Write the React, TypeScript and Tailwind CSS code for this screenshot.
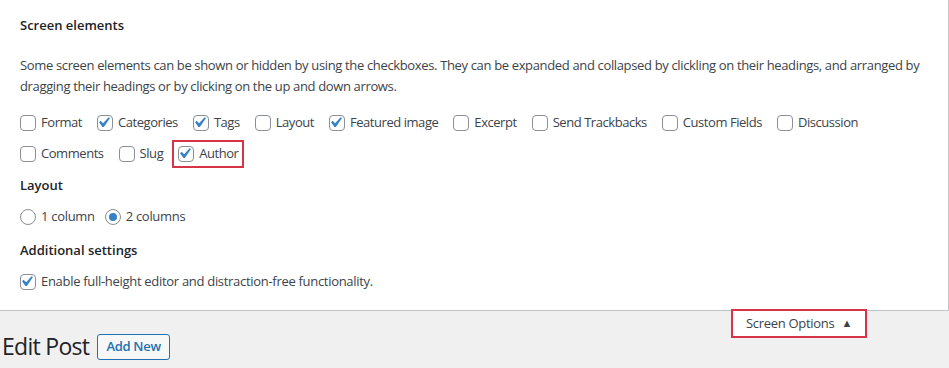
import React from 'react';

const font = { fontFamily: '"Open Sans", "Noto Sans", sans-serif' };

const Check: React.FC<{ checked?: boolean }> = ({ checked }) => (
  <span className="relative inline-block w-4 h-4 shrink-0 rounded-[4px] border border-[#8c8f94] bg-white">
    {checked && (
      <svg viewBox="0 0 20 20" className="absolute -left-[5px] -top-[4px] w-[21px] h-[21px]">
        <path d="M14.83 4.89l1.34.94-5.81 8.38H9.02L5.78 9.67l1.34-1.25 2.57 2.4z" fill="#3582c4" />
      </svg>
    )}
  </span>
);

const Radio: React.FC<{ checked?: boolean }> = ({ checked }) => (
  <span className="inline-flex items-center justify-center w-4 h-4 shrink-0 rounded-full border border-[#8c8f94] bg-white">
    {checked && <span className="w-2 h-2 rounded-full bg-[#3582c4]" />}
  </span>
);

const Item: React.FC<{ label: string; checked?: boolean; marked?: boolean }> = ({ label, checked, marked }) => (
  <label
    className={
      marked
        ? 'flex items-center gap-[5px] mr-[14px] -ml-[6px] pl-[4px] pr-[4px] h-[28px] border-2 border-[#d63447]'
        : 'flex items-center gap-[5px] mr-[15px]'
    }
  >
    <Check checked={checked} />
    <span>{label}</span>
  </label>
);

const row1 = [
  { label: 'Format' },
  { label: 'Categories', checked: true },
  { label: 'Tags', checked: true },
  { label: 'Layout' },
  { label: 'Featured image', checked: true },
  { label: 'Excerpt' },
  { label: 'Send Trackbacks' },
  { label: 'Custom Fields' },
  { label: 'Discussion' },
];

const App: React.FC = () => {
  return (
    <div className="w-[949px] h-[368px] overflow-hidden bg-[#f0f0f1] text-[13px] text-[#3c434a]" style={font}>
      <div className="h-[311px] bg-white border-r border-b border-[#c3c4c7] pl-5 pr-6 pt-[15px]">
        <h5 className="h-5 leading-5 font-semibold text-[#1d2327]">Screen elements</h5>
        <p className="mt-5 leading-[21px] tracking-[-0.35px]">
          Some screen elements can be shown or hidden by using the checkboxes. They can be expanded and collapsed by clickling on
          their headings, and arranged by dragging their headings or by clicking on the up and down arrows.
        </p>
        <div className="mt-[10px] flex h-[31px] items-center tracking-[-0.45px]">
          {row1.map((i) => (
            <Item key={i.label} label={i.label} checked={i.checked} />
          ))}
        </div>
        <div className="flex h-[31px] items-center tracking-[-0.45px]">
          <Item label="Comments" />
          <Item label="Slug" />
          <Item label="Author" checked marked />
        </div>
        <h5 className="mt-[6px] h-5 leading-5 font-semibold text-[#1d2327]">Layout</h5>
        <div className="mt-[10px] flex h-6 items-center tracking-[-0.3px]">
          <label className="flex items-center gap-[5px] mr-[10px]">
            <Radio />
            <span>1 column</span>
          </label>
          <label className="flex items-center gap-[5px]">
            <Radio checked />
            <span>2 columns</span>
          </label>
        </div>
        <h5 className="mt-[11px] h-5 leading-5 font-semibold text-[#1d2327]">Additional settings</h5>
        <label className="mt-[10px] flex h-6 items-center gap-[5px] tracking-[-0.3px]">
          <Check checked />
          <span>Enable full-height editor and distraction-free functionality.</span>
        </label>
      </div>
      <div className="relative flex items-start">
        <div className="flex items-center pl-[2px] pt-[21px]">
          <h1 className="text-[23px] leading-[29px] tracking-[-0.7px] text-[#1d2327]">Edit Post</h1>
          <button className="ml-[8px] h-[26px] px-[8px] rounded-[3px] border border-[#2271b1] bg-[#f6f7f7] text-[13px] tracking-[-0.3px] font-semibold text-[#2271b1]">
            Add New
          </button>
        </div>
        <div className="absolute left-[731px] -top-[2px] w-[136px] h-[29px] border-2 border-[#d63447] bg-white flex items-center justify-center gap-[7px] tracking-[-0.3px] text-[#3c434a]">
          <span>Screen Options</span>
          <span className="text-[11px]">▲</span>
        </div>
      </div>
    </div>
  );
};

export default App;
